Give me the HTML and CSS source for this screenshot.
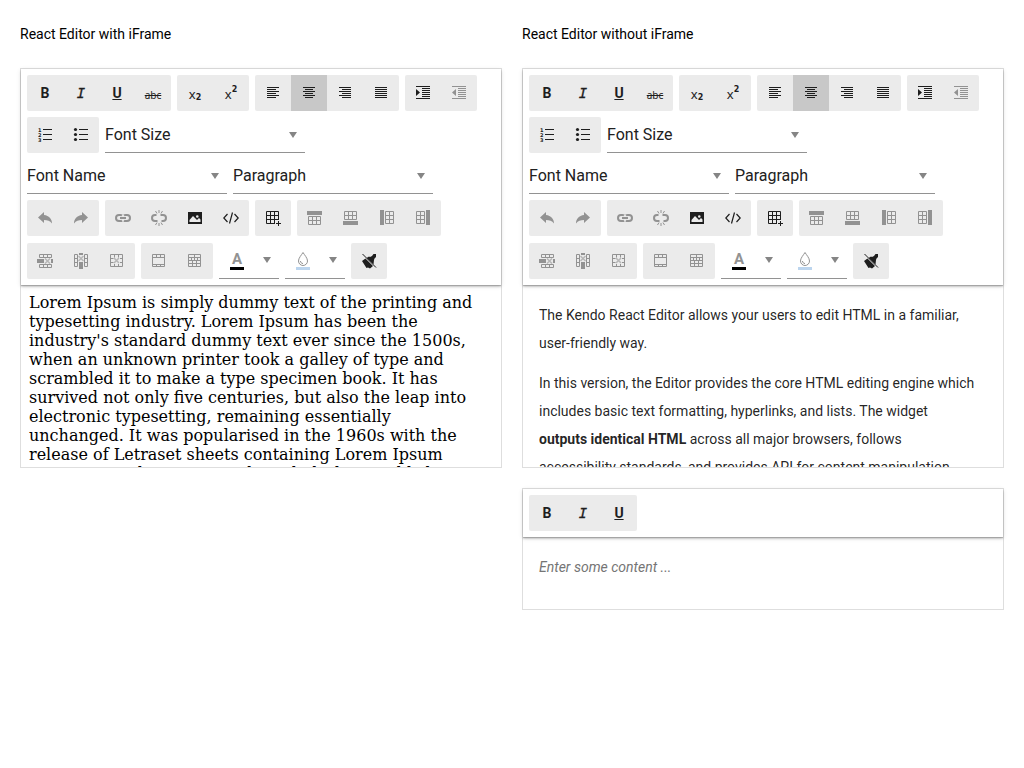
FILE: index.html
```html
<!DOCTYPE html>
<html lang="en">
<head>
<meta charset="utf-8">
<title>React Editor</title>
<link rel="stylesheet" href="styles.css">
</head>
<body>
<svg class="sprite" aria-hidden="true">
  <symbol id="left" viewBox="0 0 16 16"><path d="M2 2h12v1H2zM2 4h9v1H2zM2 6h12v1H2zM2 8h9v1H2zM2 10h12v1H2zM2 12h9v1H2z"/></symbol>
  <symbol id="center" viewBox="0 0 16 16"><path d="M2 2h12v1H2zM4 4h8v1H4zM2 6h12v1H2zM4 8h8v1H4zM2 10h12v1H2zM4 12h8v1H4z"/></symbol>
  <symbol id="right" viewBox="0 0 16 16"><path d="M2 2h12v1H2zM5 4h9v1H5zM2 6h12v1H2zM5 8h9v1H5zM2 10h12v1H2zM5 12h9v1H5z"/></symbol>
  <symbol id="justify" viewBox="0 0 16 16"><path d="M2 2h12v1H2zM2 4h12v1H2zM2 6h12v1H2zM2 8h12v1H2zM2 10h12v1H2zM2 12h12v1H2z"/></symbol>
  <symbol id="indent" viewBox="0 0 16 16"><path d="M1 1h14v1H1zM7 3h8v1H7zM7 5h8v1H7zM7 7h8v1H7zM7 9h8v1H7zM7 11h8v1H7zM1 13h14v1H1zM1 4l4 3.500-4 3.500z"/></symbol>
  <symbol id="outdent" viewBox="0 0 16 16"><path d="M1 1h14v1H1zM7 3h8v1H7zM7 5h8v1H7zM7 7h8v1H7zM7 9h8v1H7zM7 11h8v1H7zM1 13h14v1H1zM5 4L1 7.500 5 11z"/></symbol>
  <symbol id="ol" viewBox="0 0 16 16"><path d="M6 2h9v1H6zM6 7h9v1H6zM6 12h9v1H6z"/><text x="1" y="5" class="digit">1</text><text x="1" y="10" class="digit">2</text><text x="1" y="15" class="digit">3</text></symbol>
  <symbol id="ul" viewBox="0 0 16 16"><path d="M6 2h9v1H6zM6 7h9v1H6zM6 12h9v1H6z"/><circle cx="2.500" cy="2.500" r="1.600"/><circle cx="2.500" cy="7.500" r="1.600"/><circle cx="2.500" cy="12.500" r="1.600"/></symbol>
  <symbol id="undo" viewBox="0 0 16 16"><path d="M7 5V2L1 7.500 7 13v-3c3.500 0 6 .8 8 3.500C15 9 12 5.500 7 5z"/></symbol>
  <symbol id="redo" viewBox="0 0 16 16"><path d="M9 5V2l6 5.500L9 13v-3c-3.500 0-6 .8-8 3.500C1 9 4 5.500 9 5z"/></symbol>
  <symbol id="link" viewBox="0 0 16 16"><path class="line thick" d="M7 10.500C6.300 11.300 5.500 11 4 11a3 3 0 0 1 0-6c1.500 0 2.300-.3 3 .5M9 5.500C9.700 4.700 10.500 5 12 5a3 3 0 0 1 0 6c-1.500 0-2.300.3-3-.5M5 8h6"/></symbol>
  <symbol id="unlink" viewBox="0 0 16 16"><path class="line thick" d="M6.500 11H4a3 3 0 0 1 0-6h1.500M9.500 5H12a3 3 0 0 1 0 6h-1.500"/><path class="line" d="M8 0v3M8 13v3M4.500 1l1.500 2.500M11.500 1L10 3.500M4.500 15L6 12.500M11.500 15L10 12.500"/></symbol>
  <symbol id="image" viewBox="0 0 16 16"><path fill-rule="evenodd" d="M1 2h14v12H1zM2.500 12h11V9.500L12 8l-2 2-4-4-3.500 4zM9 6.500a1.300 1.300 0 1 0 2.600 0 1.300 1.300 0 0 0-2.600 0z"/></symbol>
  <symbol id="code" viewBox="0 0 16 16"><path class="line medium" d="M4.500 4L.8 8l3.700 4M11.500 4l3.700 4-3.700 4M9.500 2.500l-3 11"/></symbol>
  <symbol id="table" viewBox="0 0 16 16"><path class="line" d="M10 13.500H1.500v-12h12V10M1.500 5.500h12M1.500 9.500h12M5.500 1.500v12M9.500 1.500v12M13.500 11v5M11 13.500h5"/></symbol>
  <symbol id="row-above" viewBox="0 0 16 16"><path d="M0 1h15v4H0z"/><path class="line" d="M1.500 6.500h12v8h-12zM1.500 10.500h12M5.500 6.500v8M9.500 6.500v8"/></symbol>
  <symbol id="row-below" viewBox="0 0 16 16"><path d="M0 11h15v4H0z"/><path class="line" d="M1.500 1.500h12v8h-12zM1.500 5.500h12M5.500 1.500v8M9.500 1.500v8"/></symbol>
  <symbol id="col-before" viewBox="0 0 16 16"><path d="M1 0h4v15H1z"/><path class="line" d="M6.500 1.500h8v12h-8zM10.500 1.500v12M6.500 5.500h8M6.500 9.500h8"/></symbol>
  <symbol id="col-after" viewBox="0 0 16 16"><path d="M11 0h4v15h-4z"/><path class="line" d="M1.500 1.500h8v12h-8zM5.500 1.500v12M1.500 5.500h8M1.500 9.500h8"/></symbol>
  <symbol id="row-delete" viewBox="0 0 16 16"><path d="M0 6h7v4H0zM14 6h2v4h-2z"/><path class="line" d="M2.500 1.500h12v3h-12zM6.500 1.500v3M10.500 1.500v3M2.500 11.500h12v3h-12zM6.500 11.500v3M10.500 11.500v3"/><path class="line faint" d="M8 5.500l5 5M13 5.500l-5 5"/></symbol>
  <symbol id="col-delete" viewBox="0 0 16 16"><path d="M6 0h4v2H6zM6 9h4v7H6z"/><path class="line" d="M1.500 1.500h3v12h-3zM1.500 5.500h3M1.500 9.500h3M11.500 1.500h3v12h-3zM11.500 5.500h3M11.500 9.500h3"/><path class="line faint" d="M5.500 3l5 5M10.500 3l-5 5"/></symbol>
  <symbol id="table-delete" viewBox="0 0 16 16"><path class="line" d="M1.500 1.500h12v12h-12zM5.500 1.500v3M9.500 1.500v3M5.500 11v3M9.500 11v3M1.500 5.500h3M1.500 9.500h3M11 5.500h3M11 9.500h3"/><path class="line faint" d="M5 5l5 5M10 5l-5 5"/></symbol>
  <symbol id="merge" viewBox="0 0 16 16"><path class="line" d="M1.500 1.500h12v12h-12zM1.500 4.500h12M1.500 11.500h12M5.500 1.500v3M9.500 1.500v3M5.500 11v3M9.500 11v3"/></symbol>
  <symbol id="split" viewBox="0 0 16 16"><path class="line" d="M1.500 1.500h12v12h-12zM1.500 4.500h12M1.500 7.500h12M1.500 10.500h12M7.500 1.500v3M4.500 4.500v3M7.500 4.500v3M10.500 4.500v3M5.500 7.500v6M9.500 7.500v6"/></symbol>
  <symbol id="drop" viewBox="0 0 16 16"><path class="line" d="M8 1.500C6.500 4 3.500 7 3.500 10a4.500 4.500 0 0 0 9 0C12.500 7 9.500 4 8 1.500z"/><path class="line" d="M5.500 10c0 1.500 1 2.500 2.500 2.500"/></symbol>
  <symbol id="clean" viewBox="0 0 16 16"><path d="M1 8l3.500-2.500L12 13l-3 2.500-2-1-1.500.5zM5.500 5l2.500-1.500L9 4l2-1 1.500-2L15 1v3l-1.500 1.500L13 7l-.5 4.500z"/><path class="line" d="M1.500 1L15 14.500"/></symbol>
</svg>

<main class="page">
  <section class="column">
    <p class="title">React Editor with iFrame</p>
    <div class="editor tall">
      <div class="toolbar" role="toolbar" aria-label="Formatting">
        <div class="group">
          <button class="b" aria-label="Bold">B</button><button class="i" aria-label="Italic">I</button><button class="u" aria-label="Underline">U</button><button class="s" aria-label="Strikethrough">abc</button>
        </div>
        <div class="group">
          <button class="x" aria-label="Subscript">x<sub>2</sub></button><button class="x" aria-label="Superscript">x<sup>2</sup></button>
        </div>
        <div class="group">
          <button aria-label="Align left"><svg><use href="#left"/></svg></button><button class="on" aria-pressed="true" aria-label="Align center"><svg><use href="#center"/></svg></button><button aria-label="Align right"><svg><use href="#right"/></svg></button><button aria-label="Justify"><svg><use href="#justify"/></svg></button>
        </div>
        <div class="group">
          <button aria-label="Indent"><svg><use href="#indent"/></svg></button><button disabled aria-label="Outdent"><svg><use href="#outdent"/></svg></button>
        </div>
        <div class="group">
          <button aria-label="Ordered list"><svg><use href="#ol"/></svg></button><button aria-label="Unordered list"><svg><use href="#ul"/></svg></button>
        </div>
        <div class="drop"><select aria-label="Font size"><option>Font Size</option></select></div>
        <div class="drop"><select aria-label="Font name"><option>Font Name</option></select></div>
        <div class="drop"><select aria-label="Format"><option>Paragraph</option></select></div>
        <div class="group">
          <button disabled aria-label="Undo"><svg><use href="#undo"/></svg></button><button disabled aria-label="Redo"><svg><use href="#redo"/></svg></button>
        </div>
        <div class="group">
          <button disabled aria-label="Insert link"><svg><use href="#link"/></svg></button><button disabled aria-label="Remove link"><svg><use href="#unlink"/></svg></button><button aria-label="Insert image"><svg><use href="#image"/></svg></button><button aria-label="View HTML"><svg><use href="#code"/></svg></button>
        </div>
        <div class="group">
          <button aria-label="Insert table"><svg><use href="#table"/></svg></button>
        </div>
        <div class="group">
          <button disabled aria-label="Add row above"><svg><use href="#row-above"/></svg></button><button disabled aria-label="Add row below"><svg><use href="#row-below"/></svg></button><button disabled aria-label="Add column before"><svg><use href="#col-before"/></svg></button><button disabled aria-label="Add column after"><svg><use href="#col-after"/></svg></button>
        </div>
        <div class="group">
          <button disabled aria-label="Delete row"><svg><use href="#row-delete"/></svg></button><button disabled aria-label="Delete column"><svg><use href="#col-delete"/></svg></button><button disabled aria-label="Delete table"><svg><use href="#table-delete"/></svg></button>
        </div>
        <div class="group">
          <button disabled aria-label="Merge cells"><svg><use href="#merge"/></svg></button><button disabled aria-label="Split cell"><svg><use href="#split"/></svg></button>
        </div>
        <div class="picker">
          <button class="swatch ink" aria-label="Text color"><span class="letter">A</span></button><button class="arrow" aria-label="Choose text color"></button>
        </div>
        <div class="picker">
          <button class="swatch fill" aria-label="Background color"><svg><use href="#drop"/></svg></button><button class="arrow" aria-label="Choose background color"></button>
        </div>
        <div class="group">
          <button aria-label="Clear formatting"><svg><use href="#clean"/></svg></button>
        </div>
      </div>
      <div class="content framed" contenteditable="true">Lorem Ipsum is simply dummy text of the printing and typesetting industry. Lorem Ipsum has been the industry's standard dummy text ever since the 1500s, when an unknown printer took a galley of type and scrambled it to make a type specimen book. It has survived not only five centuries, but also the leap into electronic typesetting, remaining essentially unchanged. It was popularised in the 1960s with the release of Letraset sheets containing Lorem Ipsum passages, and more recently with desktop publishing software.</div>
    </div>
  </section>

  <section class="column">
    <p class="title">React Editor without iFrame</p>
    <div class="editor tall">
      <div class="toolbar" role="toolbar" aria-label="Formatting">
        <div class="group">
          <button class="b" aria-label="Bold">B</button><button class="i" aria-label="Italic">I</button><button class="u" aria-label="Underline">U</button><button class="s" aria-label="Strikethrough">abc</button>
        </div>
        <div class="group">
          <button class="x" aria-label="Subscript">x<sub>2</sub></button><button class="x" aria-label="Superscript">x<sup>2</sup></button>
        </div>
        <div class="group">
          <button aria-label="Align left"><svg><use href="#left"/></svg></button><button class="on" aria-pressed="true" aria-label="Align center"><svg><use href="#center"/></svg></button><button aria-label="Align right"><svg><use href="#right"/></svg></button><button aria-label="Justify"><svg><use href="#justify"/></svg></button>
        </div>
        <div class="group">
          <button aria-label="Indent"><svg><use href="#indent"/></svg></button><button disabled aria-label="Outdent"><svg><use href="#outdent"/></svg></button>
        </div>
        <div class="group">
          <button aria-label="Ordered list"><svg><use href="#ol"/></svg></button><button aria-label="Unordered list"><svg><use href="#ul"/></svg></button>
        </div>
        <div class="drop"><select aria-label="Font size"><option>Font Size</option></select></div>
        <div class="drop"><select aria-label="Font name"><option>Font Name</option></select></div>
        <div class="drop"><select aria-label="Format"><option>Paragraph</option></select></div>
        <div class="group">
          <button disabled aria-label="Undo"><svg><use href="#undo"/></svg></button><button disabled aria-label="Redo"><svg><use href="#redo"/></svg></button>
        </div>
        <div class="group">
          <button disabled aria-label="Insert link"><svg><use href="#link"/></svg></button><button disabled aria-label="Remove link"><svg><use href="#unlink"/></svg></button><button aria-label="Insert image"><svg><use href="#image"/></svg></button><button aria-label="View HTML"><svg><use href="#code"/></svg></button>
        </div>
        <div class="group">
          <button aria-label="Insert table"><svg><use href="#table"/></svg></button>
        </div>
        <div class="group">
          <button disabled aria-label="Add row above"><svg><use href="#row-above"/></svg></button><button disabled aria-label="Add row below"><svg><use href="#row-below"/></svg></button><button disabled aria-label="Add column before"><svg><use href="#col-before"/></svg></button><button disabled aria-label="Add column after"><svg><use href="#col-after"/></svg></button>
        </div>
        <div class="group">
          <button disabled aria-label="Delete row"><svg><use href="#row-delete"/></svg></button><button disabled aria-label="Delete column"><svg><use href="#col-delete"/></svg></button><button disabled aria-label="Delete table"><svg><use href="#table-delete"/></svg></button>
        </div>
        <div class="group">
          <button disabled aria-label="Merge cells"><svg><use href="#merge"/></svg></button><button disabled aria-label="Split cell"><svg><use href="#split"/></svg></button>
        </div>
        <div class="picker">
          <button class="swatch ink" aria-label="Text color"><span class="letter">A</span></button><button class="arrow" aria-label="Choose text color"></button>
        </div>
        <div class="picker">
          <button class="swatch fill" aria-label="Background color"><svg><use href="#drop"/></svg></button><button class="arrow" aria-label="Choose background color"></button>
        </div>
        <div class="group">
          <button aria-label="Clear formatting"><svg><use href="#clean"/></svg></button>
        </div>
      </div>
      <div class="content" contenteditable="true">
        <p>The Kendo React Editor allows your users to edit HTML in a familiar, user-friendly way.</p>
        <p>In this version, the Editor provides the core HTML editing engine which includes basic text formatting, hyperlinks, and lists. The widget <strong>outputs identical HTML</strong> across all major browsers, follows accessibility standards, and provides API for content manipulation.</p>
      </div>
    </div>

    <div class="editor">
      <div class="toolbar" role="toolbar" aria-label="Formatting">
        <div class="group">
          <button class="b" aria-label="Bold">B</button><button class="i" aria-label="Italic">I</button><button class="u" aria-label="Underline">U</button>
        </div>
      </div>
      <div class="content" contenteditable="true">
        <p class="placeholder">Enter some content ...</p>
      </div>
    </div>
  </section>
</main>
</body>
</html>
```
FILE: styles.css
```css
* {
  box-sizing: border-box;
}

body {
  margin: 0;
  background: #fff;
  color: #000;
  font: 14px/28px Roboto, sans-serif;
}

.sprite {
  display: none;
}

.page {
  display: grid;
  grid-template-columns: 1fr 1fr;
  align-items: start;
  gap: 20px;
  padding: 20px;
}

.column {
  display: flex;
  flex-direction: column;
  gap: 20px;
  min-width: 0;
}

.title {
  margin: 0;
}

.editor {
  display: flex;
  flex-direction: column;
  border: 1px solid #dedede;
  color: rgba(0, 0, 0, 0.87);
}

.tall {
  height: 400px;
}

.toolbar {
  display: flex;
  flex-wrap: wrap;
  flex-shrink: 0;
  align-items: flex-end;
  gap: 6px;
  padding: 6px;
  z-index: 1;
  background: #fff;
  box-shadow: 0 1px 5px rgba(0, 0, 0, 0.12), 0 2px 2px rgba(0, 0, 0, 0.14), 0 1px 1px rgba(0, 0, 0, 0.2);
}

.group {
  display: flex;
  overflow: hidden;
  border-radius: 2px;
  background: #ebebeb;
}

button {
  display: flex;
  align-items: center;
  justify-content: center;
  width: 36px;
  height: 36px;
  margin: 0;
  padding: 0;
  border: 0;
  background: none;
  color: #1e1e1e;
  font: 14px/16px Roboto, sans-serif;
}

button svg {
  width: 16px;
  height: 16px;
  fill: currentColor;
}

button:disabled {
  color: #929292;
}

.on {
  background: #c8c8c8;
}

.b {
  font-weight: 700;
}

.i {
  font: italic 14px/16px "DejaVu Sans Mono", monospace;
  -webkit-text-stroke: 0.3px currentColor;
}

.u {
  font-weight: 700;
  text-decoration: underline;
  text-underline-offset: 1px;
}

.s {
  padding-top: 3px;
  font: 10px/16px "Noto Sans", sans-serif;
  text-decoration: line-through;
}

.x {
  padding-top: 1px;
  font: 13px/16px "Noto Sans", sans-serif;
}

.x sub,
.x sup {
  font: 700 8px/8px "DejaVu Sans", sans-serif;
}

.x sub {
  padding-top: 8px;
}

.x sup {
  padding-bottom: 8px;
}

.digit {
  font: 700 5px "DejaVu Sans", sans-serif;
}

.line {
  fill: none;
  stroke: currentColor;
  stroke-width: 1px;
}

.medium {
  stroke-width: 1.2px;
}

.thick {
  stroke-width: 2px;
}

.faint {
  stroke-width: 1.5px;
  opacity: 0.6;
}

.drop {
  display: grid;
  align-items: center;
  width: 200px;
  height: 35px;
  border-bottom: 1px solid #929292;
}

.drop select {
  grid-area: 1 / 1;
  width: 100%;
  height: 34px;
  margin: 0;
  padding: 0;
  border: 0;
  appearance: none;
  background: none;
  color: #212121;
  font: 16px/24px Roboto, sans-serif;
}

.drop::after,
.arrow::after {
  content: "";
  width: 8px;
  height: 6px;
  background: #858585;
  clip-path: polygon(0 0, 100% 0, 50% 100%);
}

.drop::after {
  grid-area: 1 / 1;
  justify-self: end;
  margin-right: 8px;
  pointer-events: none;
}

.picker {
  display: flex;
  height: 37px;
  border-bottom: 1px solid #929292;
}

.swatch {
  flex-direction: column;
  color: #929292;
}

.swatch::after {
  content: "";
  width: 14px;
  height: 3px;
}

.ink::after {
  background: #000;
}

.fill::after {
  background: #bcd5ee;
}

.letter {
  font-size: 15px;
  font-weight: 700;
}

.arrow {
  width: 24px;
}

.content {
  flex: 1;
  min-height: 0;
  padding: 16px 28px 0 16px;
  overflow: hidden;
}

.content p {
  margin: 0 0 12px;
}

/* The last paragraph's margin and the bottom padding end the box. */
.content .placeholder {
  margin-bottom: 28px;
  color: #757575;
  font-style: italic;
}

.framed {
  padding: 8px 24px 0 8px;
  color: #000;
  font: 16px/19px "DejaVu Serif", serif;
}
```
